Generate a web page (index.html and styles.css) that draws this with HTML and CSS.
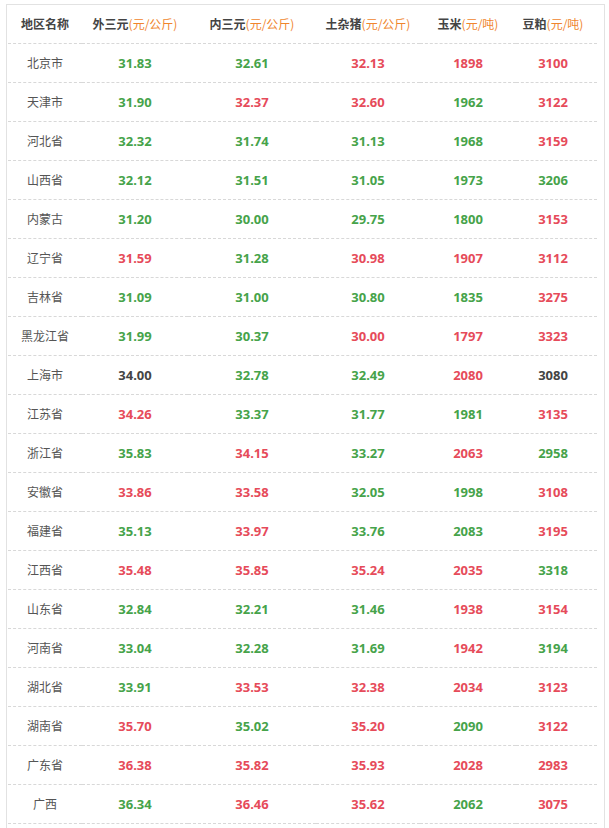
FILE: index.html
```html
<!DOCTYPE html>
<html lang="zh">
<head>
<meta charset="utf-8">
<title>价格表</title>
<link rel="stylesheet" href="styles.css">
</head>
<body>
<div class="box">
<table class="price">
<colgroup>
<col class="c1"><col class="c2"><col class="c3"><col class="c4"><col class="c5"><col class="c6">
</colgroup>
<thead>
<tr>
<th>地区名称</th>
<th>外三元<span class="unit">(元/公斤)</span></th>
<th>内三元<span class="unit">(元/公斤)</span></th>
<th>土杂猪<span class="unit">(元/公斤)</span></th>
<th>玉米<span class="unit">(元/吨)</span></th>
<th class="last">豆粕<span class="unit">(元/吨)</span></th>
</tr>
</thead>
<tbody>
<tr><td class="name">北京市</td><td class="g">31.83</td><td class="g">32.61</td><td class="r">32.13</td><td class="r">1898</td><td class="r last">3100</td></tr>
<tr><td class="name">天津市</td><td class="g">31.90</td><td class="r">32.37</td><td class="r">32.60</td><td class="g">1962</td><td class="r last">3122</td></tr>
<tr><td class="name">河北省</td><td class="g">32.32</td><td class="g">31.74</td><td class="g">31.13</td><td class="g">1968</td><td class="r last">3159</td></tr>
<tr><td class="name">山西省</td><td class="g">32.12</td><td class="g">31.51</td><td class="g">31.05</td><td class="g">1973</td><td class="g last">3206</td></tr>
<tr><td class="name">内蒙古</td><td class="g">31.20</td><td class="g">30.00</td><td class="g">29.75</td><td class="g">1800</td><td class="r last">3153</td></tr>
<tr><td class="name">辽宁省</td><td class="r">31.59</td><td class="g">31.28</td><td class="r">30.98</td><td class="r">1907</td><td class="r last">3112</td></tr>
<tr><td class="name">吉林省</td><td class="g">31.09</td><td class="g">31.00</td><td class="g">30.80</td><td class="g">1835</td><td class="r last">3275</td></tr>
<tr><td class="name">黑龙江省</td><td class="g">31.99</td><td class="g">30.37</td><td class="r">30.00</td><td class="r">1797</td><td class="r last">3323</td></tr>
<tr><td class="name">上海市</td><td class="k">34.00</td><td class="g">32.78</td><td class="g">32.49</td><td class="r">2080</td><td class="k last">3080</td></tr>
<tr><td class="name">江苏省</td><td class="r">34.26</td><td class="g">33.37</td><td class="g">31.77</td><td class="g">1981</td><td class="r last">3135</td></tr>
<tr><td class="name">浙江省</td><td class="g">35.83</td><td class="r">34.15</td><td class="g">33.27</td><td class="r">2063</td><td class="g last">2958</td></tr>
<tr><td class="name">安徽省</td><td class="r">33.86</td><td class="r">33.58</td><td class="g">32.05</td><td class="g">1998</td><td class="r last">3108</td></tr>
<tr><td class="name">福建省</td><td class="g">35.13</td><td class="r">33.97</td><td class="g">33.76</td><td class="g">2083</td><td class="r last">3195</td></tr>
<tr><td class="name">江西省</td><td class="r">35.48</td><td class="r">35.85</td><td class="r">35.24</td><td class="r">2035</td><td class="g last">3318</td></tr>
<tr><td class="name">山东省</td><td class="g">32.84</td><td class="g">32.21</td><td class="g">31.46</td><td class="r">1938</td><td class="r last">3154</td></tr>
<tr><td class="name">河南省</td><td class="g">33.04</td><td class="g">32.28</td><td class="g">31.69</td><td class="r">1942</td><td class="g last">3194</td></tr>
<tr><td class="name">湖北省</td><td class="g">33.91</td><td class="r">33.53</td><td class="r">32.38</td><td class="r">2034</td><td class="r last">3123</td></tr>
<tr><td class="name">湖南省</td><td class="r">35.70</td><td class="g">35.02</td><td class="r">35.20</td><td class="g">2090</td><td class="r last">3122</td></tr>
<tr><td class="name">广东省</td><td class="r">36.38</td><td class="r">35.82</td><td class="r">35.93</td><td class="r">2028</td><td class="r last">2983</td></tr>
<tr><td class="name">广西</td><td class="g">36.34</td><td class="r">36.46</td><td class="r">35.62</td><td class="g">2062</td><td class="r last">3075</td></tr>
</tbody>
</table>
</div>
</body>
</html>
```
FILE: styles.css
```css
html, body {
  margin: 0;
  padding: 0;
  background: #fff;
}
body {
  font-family: "Noto Sans", "Noto Sans CJK SC", sans-serif;
  color: #444;
}
.box {
  margin: 4px 0 0 6px;
  width: 595px;
  border: 1px solid #e2e2e2;
  border-bottom: none;
  padding: 0 1px;
  height: 823px;
  overflow: hidden;
}
.price {
  width: 589px;
  table-layout: fixed;
  border-collapse: collapse;
}
.c1 { width: 74px; }
.c2 { width: 106px; }
.c3 { width: 128px; }
.c4 { width: 104px; }
.c5 { width: 96px; }
.c6 { width: 81px; }
.price th,
.price td {
  height: 38px;
  padding: 0;
  text-align: center;
  vertical-align: middle;
  border-bottom: 1px dashed #d8d8d8;
  white-space: nowrap;
  line-height: 16px;
}
.price th {
  font-family: "Noto Sans CJK SC", sans-serif;
  font-size: 12px;
  font-weight: bold;
  color: #444;
}
.price .last {
  padding-right: 7px;
}
.unit {
  font-weight: normal;
  color: #f0852d;
}
.price td {
  font-size: 13px;
  font-weight: bold;
}
.price td.name {
  font-family: "Noto Sans CJK SC", sans-serif;
  font-size: 12px;
  font-weight: normal;
  color: #555;
}
.g { color: #46a34a; }
.r { color: #e64b5a; }
.k { color: #444; }
```
